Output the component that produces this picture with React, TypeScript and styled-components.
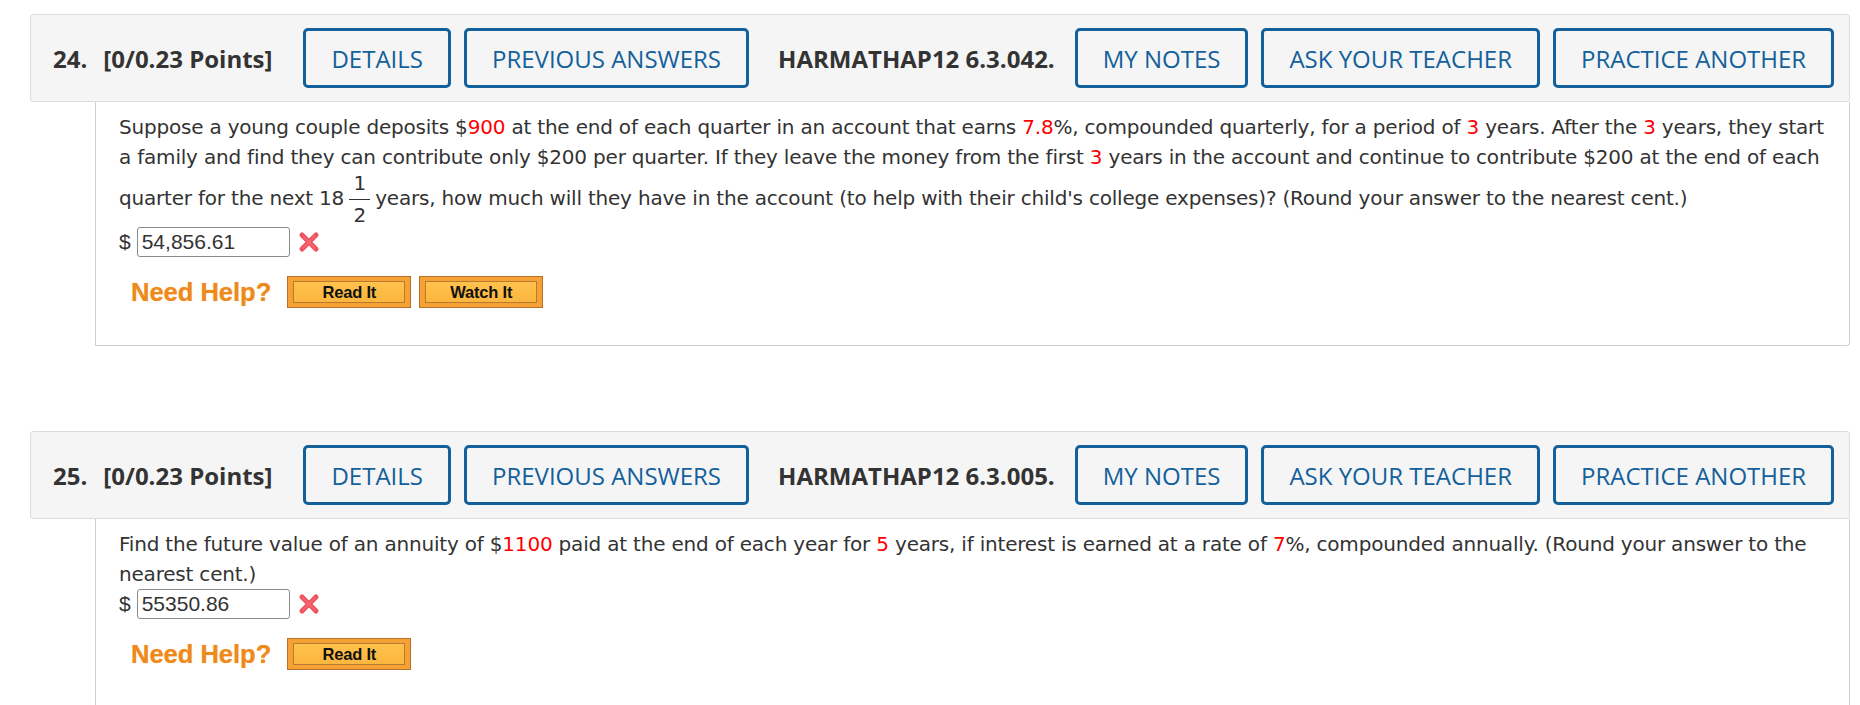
import React from "react";
import styled, {createGlobalStyle} from "styled-components";

const GlobalStyle = createGlobalStyle`
  html, body {
    margin: 0;
    padding: 0;
    background: #fff;
  }
`

type Question = {
    num: number
    code: string
    answer: string
    hasVideo: boolean
    text: React.ReactNode
}

const Red = styled.span`
  color: #f00;
`

const Fraction = styled.span`
  display: inline-flex;
  flex-direction: column;
  align-items: center;
  vertical-align: middle;
  margin: 0 5px;
  line-height: 23px;
`

const FracBar = styled.span`
  display: block;
  width: 21px;
  height: 1px;
  margin: 4px 0;
  background: #333;
`

const questions: Question[] = [
    {
        num: 24,
        code: "HARMATHAP12 6.3.042.",
        answer: "54,856.61",
        hasVideo: true,
        text: <>
            Suppose a young couple deposits $<Red>900</Red> at the end of each quarter in an account that earns <Red>7.8</Red>%,
            compounded quarterly, for a period of <Red>3</Red> years. After the <Red>3</Red> years, they start a family and
            find they can contribute only $200 per quarter. If they leave the money from the first <Red>3</Red> years in the
            account and continue to contribute $200 at the end of each quarter for the next 18
            <Fraction><span>1</span><FracBar/><span>2</span></Fraction>
            years, how much will they have in the account (to help with their child's college expenses)? (Round your answer
            to the nearest cent.)
        </>
    },
    {
        num: 25,
        code: "HARMATHAP12 6.3.005.",
        answer: "55350.86",
        hasVideo: false,
        text: <>
            Find the future value of an annuity of $<Red>1100</Red> paid at the end of each year for <Red>5</Red> years, if
            interest is earned at a rate of <Red>7</Red>%, compounded annually. (Round your answer to the nearest cent.)
        </>
    }
]

const WrongIcon = () => (
    <svg width="22" height="22" viewBox="0 0 22 22">
        <path d="M4 4 L18 18 M18 4 L4 18" stroke="#f0515d" strokeWidth="5" strokeLinecap="round"/>
        <path d="M5 5 L17 17 M17 5 L5 17" stroke="#f77a83" strokeWidth="1.5" strokeLinecap="round" opacity="0.7"/>
    </svg>
)

const QuestionBlock: React.FC<{ q: Question }> = ({q}) => {
    return <Block>
        <Header>
            <QNum>{q.num}.</QNum>
            <Points>[0/0.23 Points]</Points>
            <HeaderButton>DETAILS</HeaderButton>
            <HeaderButton>PREVIOUS ANSWERS</HeaderButton>
            <Code>{q.code}</Code>
            <HeaderButton>MY NOTES</HeaderButton>
            <HeaderButton>ASK YOUR TEACHER</HeaderButton>
            <HeaderButton>PRACTICE ANOTHER</HeaderButton>
        </Header>
        <Content>
            <QuestionText>{q.text}</QuestionText>
            <AnswerRow>
                <span>$</span>
                <AnswerInput value={q.answer} readOnly/>
                <WrongIcon/>
            </AnswerRow>
            <HelpRow>
                <NeedHelp>Need Help?</NeedHelp>
                <HelpButton><HelpInner>Read It</HelpInner></HelpButton>
                {q.hasVideo && <HelpButton><HelpInner>Watch It</HelpInner></HelpButton>}
            </HelpRow>
        </Content>
    </Block>
}

export default function App() {
    return <Page>
        <GlobalStyle/>
        {questions.map(q => <QuestionBlock key={q.num} q={q}/>)}
    </Page>
}

const Page = styled.div`
  padding: 14px 10px 0 30px;
  height: 705px;
  box-sizing: border-box;
  overflow: hidden;
`

const Block = styled.div`
  margin-bottom: 85px;
`

const Header = styled.div`
  display: flex;
  align-items: center;
  height: 88px;
  box-sizing: border-box;
  padding: 0 12px 0 22px;
  background: #f5f5f5;
  border: 1px solid #dcdcdc;
  border-radius: 3px;
  font-family: "Open Sans", "Liberation Sans", sans-serif;
  font-size: 24px;
  color: #333;
`

const QNum = styled.span`
  font-weight: 700;
  margin-right: 16px;
`

const Points = styled.span`
  font-weight: 700;
  margin-right: 31px;
`

const Code = styled.span`
  font-weight: 700;
  margin: 0 20px 0 16px;
`

const HeaderButton = styled.button`
  height: 60px;
  padding: 0 25px;
  margin-right: 13px;
  border: 3px solid #13609b;
  border-radius: 5px;
  background: transparent;
  color: #13609b;
  font-family: "Open Sans", "Liberation Sans", sans-serif;
  font-size: 24px;
  font-weight: 500;
  white-space: nowrap;
  cursor: pointer;

  &:last-child {
    margin-right: 0;
  }
`

const Content = styled.div`
  margin-left: 65px;
  padding: 10px 8px 37px 23px;
  border: 1px solid #cfcfcf;
  border-top: none;
  border-radius: 0 0 4px 0;
  font-family: "DejaVu Sans", Verdana, sans-serif;
  font-size: 20px;
  letter-spacing: -0.2px;
  color: #333;
`

const QuestionText = styled.div`
  line-height: 30px;
`

const AnswerRow = styled.div`
  display: flex;
  align-items: center;
  gap: 6px;
  height: 30px;
  font-family: "Liberation Sans", Arial, sans-serif;
  font-size: 21px;
  letter-spacing: 0;

  svg {
    margin-left: 2px;
  }
`

const AnswerInput = styled.input`
  width: 153px;
  height: 30px;
  box-sizing: border-box;
  padding: 0 4px;
  border: 1px solid #8a8a8a;
  border-radius: 3px;
  font-family: "Liberation Sans", Arial, sans-serif;
  font-size: 21px;
  color: #333;
  background: #fff;
  outline: none;
`

const HelpRow = styled.div`
  display: flex;
  align-items: center;
  margin-top: 19px;
  padding-left: 12px;
  gap: 8px;
  letter-spacing: 0;
`

const NeedHelp = styled.span`
  font-family: "Liberation Sans", Arial, sans-serif;
  font-weight: 700;
  font-size: 25.5px;
  color: #ee8a1b;
  margin-right: 8px;
  text-shadow: 0 0 1px rgba(240, 140, 30, 0.6);
`

const HelpButton = styled.button`
  width: 124px;
  height: 32px;
  padding: 4px 5px;
  box-sizing: border-box;
  border: 1px solid #b8712c;
  background: #f6a133;
  cursor: pointer;
  display: flex;
`

const HelpInner = styled.span`
  flex: 1;
  display: flex;
  align-items: center;
  justify-content: center;
  border: 1px solid #b67a33;
  background: linear-gradient(#ffc24c, #fbb63e);
  font-family: "Liberation Sans", Arial, sans-serif;
  font-weight: 700;
  font-size: 16.5px;
  color: #111;
  letter-spacing: -0.2px;
`
